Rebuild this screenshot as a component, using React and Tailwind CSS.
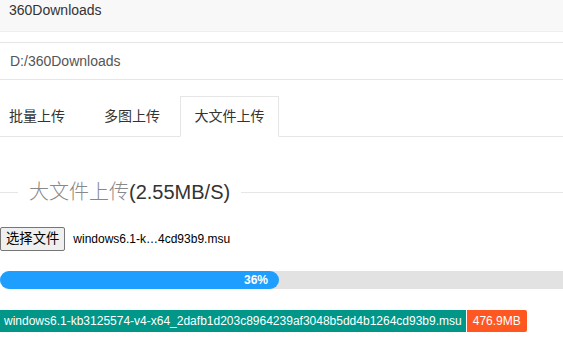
export default function App() {
  const font = { fontFamily: '"Liberation Sans", "Noto Sans CJK SC", sans-serif' }
  return (
    <div className="w-[563px] h-[348px] overflow-hidden bg-white text-[#333] text-[14px]" style={font}>
      {/* folder title */}
      <div className="h-[32px] bg-[#f8f8f8] border-b border-[#eeeeee] pl-[9px] leading-[20px]">
        360Downloads
      </div>

      {/* path field */}
      <div className="mt-[10px] h-[38px] border-y border-[#e6e6e6] pl-[10px] flex items-center text-[#555]">
        D:/360Downloads
      </div>

      {/* tabs */}
      <div className="mt-[16px] h-[41px] border-b border-[#e6e6e6] flex items-stretch">
        <div className="ml-[9px] w-[56px] flex items-center">批量上传</div>
        <div className="ml-[39px] w-[56px] flex items-center">多图上传</div>
        <div className="ml-[20px] w-[99px] h-[41px] border border-[#e6e6e6] border-b-white bg-white flex items-center justify-center">
          大文件上传
        </div>
      </div>

      {/* fieldset legend */}
      <div className="mt-[40px] h-[30px] flex items-center">
        <div className="w-[18px] h-px bg-[#e6e6e6]" />
        <div className="px-[11px] text-[20px] leading-[30px] text-[#333]">
          <span className="text-[#888] font-light">大文件上传</span>(2.55MB/S)
        </div>
        <div className="flex-1 h-px bg-[#e6e6e6]" />
      </div>

      {/* file picker */}
      <div className="mt-[20px] flex items-center h-[24px] text-[13.33px]">
        <div className="h-[24px] px-[5px] flex items-center bg-[#efefef] border border-[#767676] rounded-[2px] text-black">
          选择文件
        </div>
        <span className="ml-[8px] text-[12px] text-black">windows6.1-k…4cd93b9.msu</span>
      </div>

      {/* progress */}
      <div className="mt-[20px] h-[18px] w-full bg-[#e2e2e2] rounded-l-full">
        <div className="h-[18px] w-[279px] bg-[#1e9fff] rounded-full flex items-center justify-end pr-[11px] text-white text-[12px] font-bold">
          36%
        </div>
      </div>

      {/* file badges */}
      <div className="mt-[21px] flex h-[22px] text-[12px] text-white">
        <div className="h-[22px] bg-[#009688] pl-[4px] pr-[4px] flex items-center">
          windows6.1-kb3125574-v4-x64_2dafb1d203c8964239af3048b5dd4b1264cd93b9.msu
        </div>
        <div className="ml-px h-[22px] bg-[#ff5722] px-[6px] rounded-r-[2px] flex items-center">
          476.9MB
        </div>
      </div>
    </div>
  )
}
